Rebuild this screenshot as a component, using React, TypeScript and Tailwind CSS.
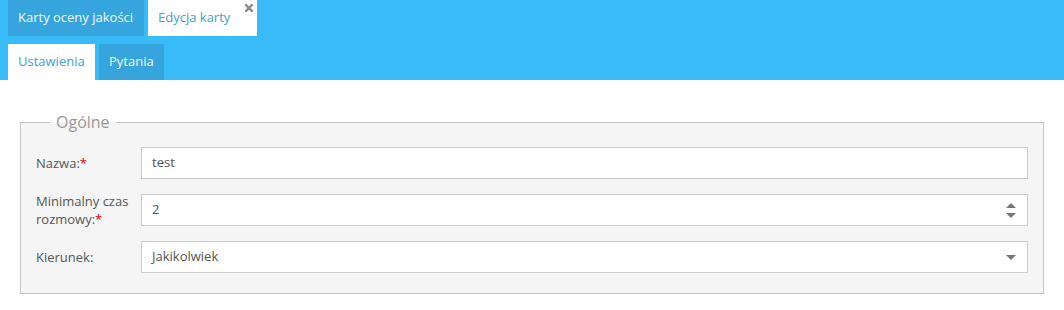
const Caret = ({ up }: { up?: boolean }) => (
  <svg width="10" height="5" viewBox="0 0 10 5" className="block">
    <path d={up ? 'M0 5 L5 0 L10 5 Z' : 'M0 0 L10 0 L5 5 Z'} fill="#777" />
  </svg>
);

export default function App() {
  return (
    <div className="min-h-screen bg-white text-[13px] text-[#555]" style={{ fontFamily: '"Open Sans", sans-serif' }}>
      {/* Top tabs */}
      <div className="bg-[#38bbf6] px-2">
        <div className="flex gap-1 h-9">
          <div className="flex items-center w-[136px] px-[10px] bg-[#36a5de] text-[#f1f8fd]">Karty oceny jakości</div>
          <div className="relative flex items-center w-[109px] pl-[10px] bg-white text-[#3d9fd5]">
            Edycja karty
            <svg width="8" height="8" viewBox="0 0 8 8" className="absolute right-[4px] top-[4px]">
              <path d="M1 1 L7 7 M7 1 L1 7" stroke="#8a8a8a" strokeWidth="2.4" strokeLinecap="square" />
            </svg>
          </div>
        </div>
        <div className="flex gap-1 h-9 mt-2">
          <div className="flex items-center w-[87px] px-[10px] bg-white text-[#3d9fd5]">Ustawienia</div>
          <div className="flex items-center w-[65px] px-[10px] bg-[#36a5de] text-[#f1f8fd]">Pytania</div>
        </div>
      </div>

      {/* Form */}
      <div className="px-5 pt-[31px]">
        <fieldset className="border border-[#c8c8c8] bg-[#f5f5f5] px-[15px] pt-[14px] pb-5">
          <legend className="ml-[14px] px-[6px] text-[16px] leading-[22px] text-[#999]">Ogólne</legend>
          <div className="grid grid-cols-[105px_1fr] auto-rows-[32px] gap-y-[15px] items-center">
            <label className="leading-[18px]">
              Nazwa:<span className="text-[#e00]">*</span>
            </label>
            <div className="h-8 border border-[#ccc] bg-white flex items-center px-[10px]">test</div>

            <label className="leading-[18px]">
              Minimalny czas rozmowy:<span className="text-[#e00]">*</span>
            </label>
            <div className="h-8 border border-[#ccc] bg-white flex items-center justify-between pl-[10px] pr-[11px]">
              <span>2</span>
              <div className="flex flex-col gap-[5px]">
                <Caret up />
                <Caret />
              </div>
            </div>

            <label className="leading-[18px]">Kierunek:</label>
            <div className="h-8 border border-[#ccc] bg-white flex items-center justify-between pl-[10px] pr-[11px]">
              <span>Jakikolwiek</span>
              <Caret />
            </div>
          </div>
        </fieldset>
      </div>
    </div>
  );
}
